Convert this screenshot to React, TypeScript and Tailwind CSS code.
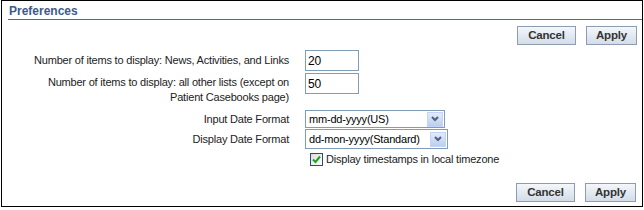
import React from 'react';

const font = { fontFamily: '"Liberation Sans", Arial, sans-serif' };

const Button = ({ label, w }: { label: string; w: string }) => (
  <button
    className={`${w} h-[19px] border border-[#8b9cb3] bg-gradient-to-b from-[#f4f7fb] to-[#d3dce8] text-[11.5px] font-bold text-[#333333] leading-none`}
  >
    {label}
  </button>
);

const Select = ({ value, w, h }: { value: string; w: string; h: string }) => (
  <div className={`${w} ${h} border border-[#7f9db9] flex items-center bg-white`}>
    <span className="flex-1 pl-[3px] leading-none text-black whitespace-nowrap">{value}</span>
    <span className="w-[16px] h-[15px] mr-px bg-gradient-to-b from-[#e3ebf8] to-[#bccfec] border border-[#c3d3fd] flex items-center justify-center">
      <svg width="8" height="6" viewBox="0 0 8 6">
        <path d="M1 1 L4 4 L7 1" stroke="#4d6185" strokeWidth="2" fill="none" />
      </svg>
    </span>
  </div>
);

export default function App() {
  return (
    <div className="w-[644px] h-[210px] bg-white pl-px" style={font}>
      <div className="w-[642px] h-[207px] border border-black flex flex-col text-[11px] tracking-[-0.2px] text-[#222222]">
        {/* section header */}
        <div className="ml-[6px] mr-0 h-[19px] border-b border-[#4a6a9a] flex items-end pb-[2px] pl-px">
          <span className="text-[12px] font-bold text-[#3c5a8c] leading-none tracking-normal">Preferences</span>
        </div>

        <div className="flex justify-end gap-[10px] pr-[5px] mt-[6px]">
          <Button label="Cancel" w="w-[59px]" />
          <Button label="Apply" w="w-[51px]" />
        </div>

        <div className="flex mt-[5px] h-[21px] items-center">
          <div className="w-[287px] text-right whitespace-nowrap">
            Number of items to display: News, Activities, and Links
          </div>
          <input
            defaultValue="20"
            className="ml-[16px] w-[54px] h-[21px] border border-[#7f9db9] px-[2px] text-[12px] text-black outline-none"
          />
        </div>

        <div className="flex mt-[2px] h-[31px] items-start">
          <div className="w-[287px] text-right leading-[15px] mt-[2px] whitespace-nowrap">
            Number of items to display: all other lists (except on
            <br />
            Patient Casebooks page)
          </div>
          <input
            defaultValue="50"
            className="ml-[16px] w-[54px] h-[21px] border border-[#7f9db9] px-[2px] text-[12px] text-black outline-none"
          />
        </div>

        <div className="flex mt-[6px] h-[18px] items-center">
          <div className="w-[287px] text-right whitespace-nowrap">Input Date Format</div>
          <div className="ml-[16px]">
            <Select value="mm-dd-yyyy(US)" w="w-[140px]" h="h-[18px]" />
          </div>
        </div>

        <div className="flex mt-px h-[20px] items-center">
          <div className="w-[287px] text-right whitespace-nowrap">Display Date Format</div>
          <div className="ml-[16px]">
            <Select value="dd-mon-yyyy(Standard)" w="w-[143px]" h="h-[20px]" />
          </div>
        </div>

        <label className="flex items-center gap-[3px] mt-[3px] ml-[308px]">
          <span className="w-[13px] h-[13px] border border-[#1c5180] bg-gradient-to-br from-[#dcdcd7] to-white flex items-center justify-center">
            <svg width="9" height="9" viewBox="0 0 9 9">
              <path d="M1 4.5 L3.5 7 L8 1.5" stroke="#21a121" strokeWidth="2" fill="none" />
            </svg>
          </span>
          <span className="leading-[15px] whitespace-nowrap">Display timestamps in local timezone</span>
        </label>

        <div className="flex justify-end gap-[10px] pr-[6px] mt-auto mb-[4px]">
          <Button label="Cancel" w="w-[59px]" />
          <Button label="Apply" w="w-[51px]" />
        </div>
      </div>
    </div>
  );
}
